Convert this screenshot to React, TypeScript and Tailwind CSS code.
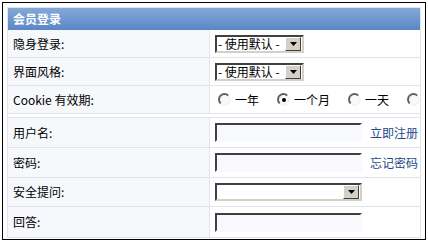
import React from "react";

const font = { fontFamily: '"SimSun", "Noto Sans CJK SC", "Liberation Sans", sans-serif' };

function Arrow() {
  return (
    <span className="flex h-[14px] w-[16px] items-center justify-center border border-t-white border-l-white border-r-[#404040] border-b-[#404040] bg-[#d4d0c8]">
      <svg width="7" height="4" viewBox="0 0 7 4">
        <path d="M0 0h7L3.5 4z" fill="#000" />
      </svg>
    </span>
  );
}

function Select({ text, w }: { text?: string; w: string }) {
  return (
    <span
      className={`flex h-[18px] items-center justify-between border-2 border-t-[#404040] border-l-[#404040] border-r-[#d4d0c8] border-b-[#d4d0c8] bg-white pr-[1px] ${w}`}
    >
      <span className="pl-[1px] text-[12px] leading-none text-black">{text}</span>
      <Arrow />
    </span>
  );
}

function Input() {
  return (
    <span className="block h-[19px] w-[147px] border-2 border-t-[#404040] border-l-[#404040] border-r-[#f8f9fd] border-b-[#f8f9fd] bg-[#f8f9fd]" />
  );
}

function Radio({ checked, label }: { checked?: boolean; label: string }) {
  return (
    <span className="flex shrink-0 items-center gap-[4px]">
      <span className="relative flex h-[13px] w-[13px] items-center justify-center rounded-full border-2 border-t-[#606060] border-l-[#606060] border-r-[#f4f4f4] border-b-[#f4f4f4] bg-[#f8f9fd]">
        {checked && <span className="h-[4px] w-[4px] rounded-full bg-black" />}
      </span>
      <span className="text-[12px] text-black">{label}</span>
    </span>
  );
}

function Row({ label, children, h, last }: { label: string; children: React.ReactNode; h: string; last?: boolean }) {
  return (
    <div className={`grid grid-cols-[202px_1fr] ${h} ${last ? "" : "border-b border-[#dfe4ef]"}`}>
      <div className="flex items-center border-r border-[#dfe4ef] bg-[#f7f8fc] pl-[5px] text-[12px] text-black">
        {label}
      </div>
      <div className="flex items-center overflow-hidden whitespace-nowrap bg-white pl-[5px]">{children}</div>
    </div>
  );
}

export default function App() {
  return (
    <div className="h-[243px] w-[428px] bg-white pl-[2px] pt-[2px]" style={font}>
      <div className="w-[424px] border border-black p-[4px] pb-[1px]">
        <div className="border border-[#dfe4ef]">
          <div className="flex h-[22px] items-center bg-gradient-to-b from-[#86a8d8] to-[#5a86c5] pl-[5px] text-[12px] font-bold text-white">
            会员登录
          </div>
          <Row label="隐身登录:" h="h-[28px]">
            <Select text="- 使用默认 -" w="w-[89px]" />
          </Row>
          <Row label="界面风格:" h="h-[28px]">
            <Select text="- 使用默认 -" w="w-[89px]" />
          </Row>
          <div className="border-b border-[#dfe4ef] pb-[3px]">
            <Row label="Cookie 有效期:" h="h-[28px]">
              <div className="flex gap-[18px] pl-[3px]">
                <Radio label="一年" />
                <Radio checked label="一个月" />
                <Radio label="一天" />
                <Radio label="" />
              </div>
            </Row>
          </div>
          <Row label="用户名:" h="h-[30px]">
            <Input />
            <a className="ml-[8px] text-[12px] text-[#1f4a87]">立即注册</a>
          </Row>
          <Row label="密码:" h="h-[30px]">
            <Input />
            <a className="ml-[8px] text-[12px] text-[#1f4a87]">忘记密码</a>
          </Row>
          <Row label="安全提问:" h="h-[29px]">
            <Select w="w-[147px]" />
          </Row>
          <Row label="回答:" h="h-[30px]" last>
            <Input />
          </Row>
        </div>
      </div>
    </div>
  );
}
